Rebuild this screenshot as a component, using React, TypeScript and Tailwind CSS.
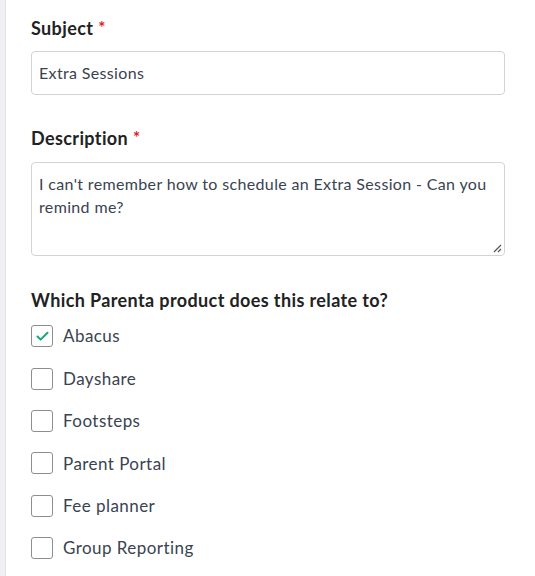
import { Check } from "lucide-react";

const products = [
  { name: "Abacus", checked: true },
  { name: "Dayshare", checked: false },
  { name: "Footsteps", checked: false },
  { name: "Parent Portal", checked: false },
  { name: "Fee planner", checked: false },
  { name: "Group Reporting", checked: false },
];

function Label({ text, required }: { text: string; required?: boolean }) {
  return (
    <div className="text-[18px] font-bold text-[#222] leading-[24px] tracking-[0.38px]">
      {text}
      {required && <span className="ml-[5px] text-[#e0201f] align-top text-[17px]">*</span>}
    </div>
  );
}

export default function App() {
  return (
    <div className="flex h-[576px] w-[535px] bg-white font-['Lato','Open_Sans',sans-serif] overflow-hidden">
      <div className="w-[6px] shrink-0 bg-[#f1f0f3] border-r border-[#e2e1e5]" />
      <div className="flex-1 pl-[25px] pr-[30px] pt-[16px]">
        <Label text="Subject" required />
        <div className="mt-[11px] h-[44px] rounded-[4px] border border-[#d3d3d3] flex items-center px-[7px] text-[16px] tracking-[0.35px] text-[#3a4350]">
          Extra Sessions
        </div>

        <div className="mt-[31px]">
          <Label text="Description" required />
        </div>
        <div className="relative mt-[12px] h-[94px] rounded-[4px] border border-[#d3d3d3] px-[7px] pt-[9px] text-[16px] leading-[23px] tracking-[0.35px] text-[#3a4350]">
          I can't remember how to schedule an Extra Session - Can you remind me?
          <svg className="absolute right-[2px] bottom-[2px]" width="9" height="9" viewBox="0 0 9 9">
            <path d="M1 8 L8 1 M5 8 L8 5" stroke="#555" strokeWidth="1.2" />
          </svg>
        </div>

        <div className="mt-[32px] text-[18px] font-bold text-[#222] leading-[24px] tracking-[0.38px]">
          Which Parenta product does this relate to?
        </div>
        <div className="mt-[3px] flex flex-col">
          {products.map((p) => (
            <label key={p.name} className="flex items-center gap-[10px] h-[42.4px]">
              <span className="w-[22px] h-[22px] rounded-[3px] border border-[#8e8e8e] flex items-center justify-center bg-white">
                {p.checked && <Check className="w-[15px] h-[15px] text-[#17a873]" strokeWidth={3.2} />}
              </span>
              <span className="text-[17px] tracking-[0.45px] text-[#3a4350]">{p.name}</span>
            </label>
          ))}
        </div>
      </div>
    </div>
  );
}
